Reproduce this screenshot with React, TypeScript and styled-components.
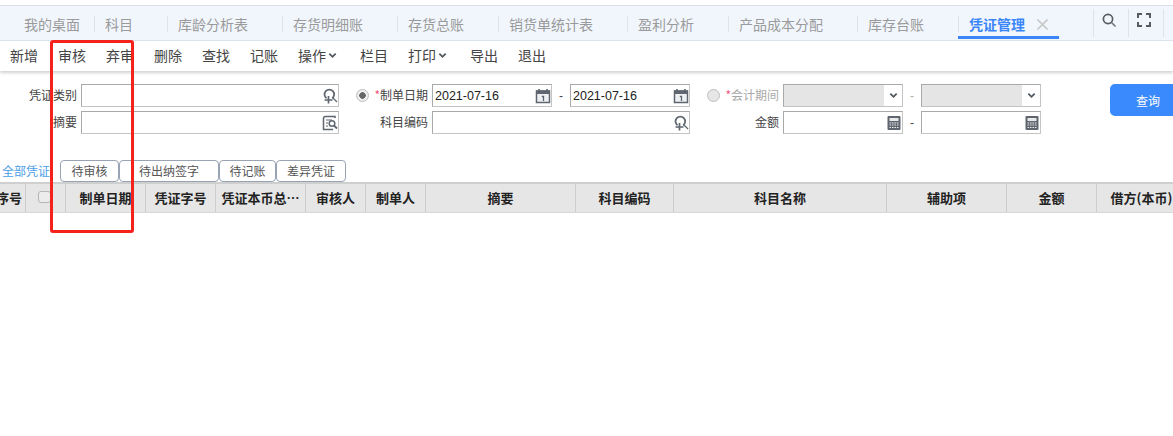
import React from "react";
import styled, { createGlobalStyle } from "styled-components";

const Global = createGlobalStyle`
  html, body { margin: 0; padding: 0; background: #fff; overflow: hidden; }
  body { width: 1173px; height: 436px; font-family: "Noto Sans CJK SC", "Liberation Sans", sans-serif; color: #333; }
`;
const Page = styled.div`
  position: relative;
  width: 1173px;
  height: 436px;
  overflow: hidden;
  padding-top: 5px;
  box-sizing: border-box;
`;
const TabBar = styled.div`
  display: flex;
  height: 36px;
  box-sizing: border-box;
  background: #f1f6fd;
  border-top: 1px solid #dcdfe4;
  border-bottom: 1px solid #dfe5ee;
  padding-left: 24px;
`;
const TabItem = styled.div<{ $active?: boolean }>`
  position: relative;
  flex: none;
  display: flex;
  align-items: center;
  height: 33px;
  font-size: 14px;
  line-height: 20px;
  white-space: nowrap;
  color: ${(p) => (p.$active ? "#3a86f8" : "#9a9a9a")};
  font-weight: ${(p) => (p.$active ? 700 : 400)};
  padding: 3px 34px 0 11px;
  box-sizing: border-box;
  &::before {
    content: "";
    position: absolute;
    left: 0;
    top: 10px;
    height: 16px;
    width: 1px;
    background: #dde3ea;
  }
  &:first-child { padding: 3px 14px 0 0; }
  &:first-child::before { display: none; }
  ${(p) => p.$active && `
    padding-right: 0;
    width: 101px;
    &::after {
      content: "";
      position: absolute;
      left: 0; right: 0; bottom: 0;
      height: 3px;
      background: #3a86f8;
    }
  `}
`;
const TabClose = styled.svg`
  margin-left: 12px;
  width: 11px;
  height: 11px;
`;
const TabTools = styled.div`
  margin-left: 34px;
  display: flex;
  height: 28px;
  margin-top: 3px;
`;
const ToolCell = styled.div`
  width: 35px;
  height: 28px;
  border-left: 1px solid #dde3ea;
  box-sizing: border-box;
  display: flex;
  align-items: flex-start;
  padding: 4px 0 0 8px;
`;
const Toolbar = styled.div`
  display: flex;
  gap: 20px;
  height: 30px;
  align-items: center;
  padding: 0 0 2px 10px;
  box-sizing: border-box;
  background: #fff;
  box-shadow: 0 2px 3px rgba(0, 0, 0, 0.18);
  font-size: 14px;
  color: #444;
`;
const ToolButton = styled.div`
  display: flex;
  align-items: center;
  line-height: 20px;
  gap: 2px;
  white-space: nowrap;
`;
const Spaced = styled(ToolButton)`
  margin-right: 3px;
`;
const FormArea = styled.div`
  display: flex;
  align-items: flex-start;
  padding-top: 13px;
  height: 89px;
  box-sizing: border-box;
`;
const FormGrid = styled.div`
  display: grid;
  grid-template-columns: 81px 258px 93px 258px 93px 258px;
  grid-auto-rows: 23px;
  row-gap: 4px;
`;
const Label = styled.div<{ $muted?: boolean }>`
  display: flex;
  align-items: center;
  justify-content: flex-end;
  padding: 0 4px 2px 0;
  font-size: 12px;
  line-height: 16px;
  color: ${(p) => (p.$muted ? "#a8a8a8" : "#444")};
  white-space: nowrap;
`;
const Star = styled.span`
  color: #f2557f;
`;
const Radio = styled.span<{ $on?: boolean }>`
  width: 11px;
  height: 11px;
  border-radius: 50%;
  border: 1px solid #bdbdbd;
  background: ${(p) => (p.$on ? "radial-gradient(circle, #666 0 3px, #eee 3.5px)" : "#e6e6e6")};
  margin: 2px 5px 0 0;
  flex: none;
  box-sizing: content-box;
`;
const Field = styled.div`
  display: flex;
  align-items: center;
  height: 23px;
  box-sizing: border-box;
  flex: 1;
  border: 1px solid #c4c4c4;
  border-top-color: #a9a9a9;
  border-left-color: #a9a9a9;
  background: #fff;
  font-family: "Liberation Sans", sans-serif;
  font-size: 12.5px;
  color: #222;
  padding-left: 1px;
`;
const FieldText = styled.span<{ $disabled?: boolean }>`
  flex: 1;
  align-self: stretch;
  display: flex;
  align-items: center;
  padding-left: 1px;
  ${(p) => p.$disabled && "background: #e5e5e5; margin-left: -1px;"}
`;
const Range = styled.div`
  display: flex;
  align-items: center;
  width: 258px;
`;
const RangeField = styled(Field)`
  flex: none;
  width: 120px;
`;
const Dash = styled.span<{ $muted?: boolean }>`
  width: 18px;
  text-align: center;
  font-family: "Liberation Sans", sans-serif;
  font-size: 12px;
  color: ${(p) => (p.$muted ? "#aaa" : "#444")};
`;
const IconBox = styled.svg`
  flex: none;
  width: 16px;
  height: 16px;
`;
const QueryButton = styled.button`
  margin-left: 69px;
  flex: none;
  width: 80px;
  height: 32px;
  border: none;
  border-radius: 5px;
  background: #3a8afe;
  color: #fff;
  font-family: inherit;
  font-size: 12px;
  padding: 0 4px 0 0;
`;
const StatusTabs = styled.div`
  display: flex;
  height: 22px;
`;
const StatusTab = styled.div<{ $width: number; $active?: boolean }>`
  width: ${(p) => p.$width}px;
  height: 22px;
  box-sizing: border-box;
  display: flex;
  align-items: center;
  justify-content: center;
  font-size: 12px;
  line-height: 16px;
  white-space: nowrap;
  color: ${(p) => (p.$active ? "#4a9de8" : "#555")};
  border: 1px solid ${(p) => (p.$active ? "transparent" : "#98a4b4")};
  border-radius: 4px;
  ${(p) => p.$active && "justify-content: flex-start; padding-left: 1px;"}
`;
const HeaderRow = styled.div`
  display: flex;
  height: 31px;
  box-sizing: border-box;
  background: #e6e6e6;
  border-top: 2px solid #cfcfcf;
  border-bottom: 1px solid #d8d8d8;
`;
const HeaderCell = styled.div<{ $width: number; $end?: boolean }>`
  flex: none;
  width: ${(p) => p.$width}px;
  box-sizing: border-box;
  display: flex;
  align-items: center;
  justify-content: ${(p) => (p.$end ? "flex-end" : "center")};
  padding: ${(p) => (p.$end ? "0 3px 2px 0" : "0 0 2px")};
  border-right: 1px solid #cdcdcd;
  font-size: 13px;
  font-weight: 700;
  color: #222;
  white-space: nowrap;
  overflow: hidden;
`;
const CheckBox = styled.span`
  width: 11px;
  height: 10px;
  border: 1px solid #b5b5b5;
  border-radius: 3px;
  background: #ececec;
  margin: 0 0 1px -2px;
`;
const Annotation = styled.div`
  position: absolute;
  left: 50px;
  top: 40px;
  width: 84px;
  height: 193px;
  box-sizing: border-box;
  border: 3px solid #f5211b;
  border-radius: 3px;
  pointer-events: none;
`;

const Lookup = () => (
  <IconBox viewBox="0 0 16 16" fill="none" stroke="#5f6670" strokeWidth="1.7">
    <path d="M4.5 10.2A4.8 4.8 0 1 1 10.2 10.2" />
    <path d="M10.5 9.5L15 14" strokeWidth="1.3" />
    <path d="M6.5 8v7.5M2.5 12h8" />
  </IconBox>
);
const DocSearch = () => (
  <IconBox viewBox="0 0 16 16" fill="none" stroke="#5f6670" strokeWidth="1.5">
    <path d="M13 3V1.5H3.5Q1.5 1.5 1.5 3.5V14.5H11" />
    <path d="M4 5h6M4 8h2M4 11h2" strokeWidth="1.1" />
    <circle cx="10" cy="8.5" r="2.8" />
    <path d="M12 10.5l3 3" strokeWidth="1.8" />
  </IconBox>
);
const Calendar = () => (
  <IconBox viewBox="0 0 16 16" fill="none">
    <rect x="1.5" y="3" width="13" height="11.5" fill="#eef0f2" stroke="#5f6670" strokeWidth="1.5" />
    <rect x="1" y="2.5" width="14" height="3.5" fill="#5f6670" />
    <path d="M4 1v3M12 1v3" stroke="#5f6670" strokeWidth="1.6" />
    <path d="M6.8 8.5h1.7v4.5" stroke="#5f6670" strokeWidth="1.3" />
  </IconBox>
);
const Calculator = () => (
  <IconBox viewBox="0 0 16 16" fill="none">
    <rect x="1.5" y="1" width="13" height="14" rx="1" fill="#5f6670" />
    <rect x="3.5" y="3" width="9" height="3" fill="#e8e8e8" />
    <path d="M3.5 8h9M3.5 10h9M3.5 12.5h9" stroke="#e8e8e8" strokeWidth="1.2" />
    <path d="M5.5 7.5v6M8 7.5v6M10.5 7.5v6" stroke="#5f6670" strokeWidth="0.9" />
  </IconBox>
);
const ChevronBox = styled.span`
  flex: none;
  width: 18px;
  display: flex;
  align-items: center;
  justify-content: center;
`;
const Chevron = ({ size = 9 }: { size?: number }) => (
  <svg width={size} height={size} viewBox="0 0 10 10" fill="none" stroke="#505860" strokeWidth="2">
    <path d="M1.5 3l3.5 3.5L8.5 3" />
  </svg>
);

const tabs = ["我的桌面", "科目", "库龄分析表", "存货明细账", "存货总账", "销货单统计表", "盈利分析", "产品成本分配", "库存台账"];
const columns: [string, number][] = [
  ["制单日期", 80], ["凭证字号", 70], ["凭证本币总…", 90], ["审核人", 60], ["制单人", 60], ["摘要", 150],
  ["科目编码", 98], ["科目名称", 213], ["辅助项", 120], ["金额", 90], ["借方(本币)", 90],
];

export default function App() {
  return (
    <Page>
      <Global />
      <TabBar>
        {tabs.map((t) => <TabItem key={t}>{t}</TabItem>)}
        <TabItem $active>
          凭证管理
          <TabClose viewBox="0 0 11 11" stroke="#c9c9c9" strokeWidth="1.6"><path d="M0.5 0.5l10 10M10.5 0.5l-10 10" /></TabClose>
        </TabItem>
        <TabTools>
          <ToolCell>
            <svg width="15" height="15" viewBox="0 0 15 15" fill="none" stroke="#555b63" strokeWidth="1.7">
              <circle cx="6" cy="6" r="4.6" /><path d="M9.5 9.5l4 4" stroke="#777" />
            </svg>
          </ToolCell>
          <ToolCell>
            <svg width="14" height="14" viewBox="0 0 14 14" fill="none" stroke="#555b63" strokeWidth="2">
              <path d="M1 5V1h4M9 1h4v4M13 9v4H9M5 13H1V9" />
            </svg>
          </ToolCell>
          <ToolCell />
        </TabTools>
      </TabBar>
      <Toolbar>
        <ToolButton>新增</ToolButton>
        <ToolButton>审核</ToolButton>
        <ToolButton>弃审</ToolButton>
        <ToolButton>删除</ToolButton>
        <ToolButton>查找</ToolButton>
        <ToolButton>记账</ToolButton>
        <Spaced>操作<Chevron /></Spaced>
        <ToolButton>栏目</ToolButton>
        <Spaced>打印<Chevron /></Spaced>
        <ToolButton>导出</ToolButton>
        <ToolButton>退出</ToolButton>
      </Toolbar>
      <FormArea>
        <FormGrid>
          <Label>凭证类别</Label>
          <Field><FieldText /><Lookup /></Field>
          <Label><Radio $on /><Star>*</Star>制单日期</Label>
          <Range>
            <RangeField><FieldText>2021-07-16</FieldText><Calendar /></RangeField>
            <Dash>-</Dash>
            <RangeField><FieldText>2021-07-16</FieldText><Calendar /></RangeField>
          </Range>
          <Label $muted><Radio /><Star>*</Star>会计期间</Label>
          <Range>
            <RangeField><FieldText $disabled /><ChevronBox><Chevron /></ChevronBox></RangeField>
            <Dash $muted>-</Dash>
            <RangeField><FieldText $disabled /><ChevronBox><Chevron /></ChevronBox></RangeField>
          </Range>
          <Label>摘要</Label>
          <Field><FieldText /><DocSearch /></Field>
          <Label>科目编码</Label>
          <Field><FieldText /><Lookup /></Field>
          <Label>金额</Label>
          <Range>
            <RangeField><FieldText /><Calculator /></RangeField>
            <Dash>-</Dash>
            <RangeField><FieldText /><Calculator /></RangeField>
          </Range>
        </FormGrid>
        <QueryButton>查询</QueryButton>
      </FormArea>
      <StatusTabs>
        <StatusTab $width={60} $active>全部凭证</StatusTab>
        <StatusTab $width={59}>待审核</StatusTab>
        <StatusTab $width={100}>待出纳签字</StatusTab>
        <StatusTab $width={57}>待记账</StatusTab>
        <StatusTab $width={70}>差异凭证</StatusTab>
      </StatusTabs>
      <HeaderRow>
        <HeaderCell $width={26} $end>序号</HeaderCell>
        <HeaderCell $width={40}><CheckBox /></HeaderCell>
        {columns.map(([c, w]) => <HeaderCell key={c} $width={w}>{c}</HeaderCell>)}
      </HeaderRow>
      <Annotation />
    </Page>
  );
}
